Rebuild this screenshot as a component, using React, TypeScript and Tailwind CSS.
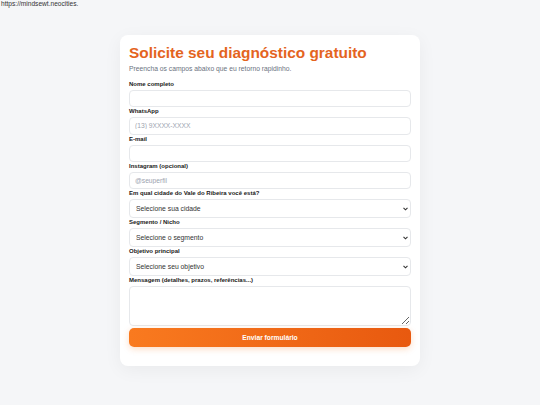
import { FC } from 'react'

type Field = {
    label: string,
    kind: 'input' | 'select' | 'textarea',
    placeholder?: string,
};

const fields: Field[] = [
    { label: 'Nome completo', kind: 'input' },
    { label: 'WhatsApp', kind: 'input', placeholder: '(13) 9XXXX-XXXX' },
    { label: 'E-mail', kind: 'input' },
    { label: 'Instagram (opcional)', kind: 'input', placeholder: '@seuperfil' },
    { label: 'Em qual cidade do Vale do Ribeira você está?', kind: 'select', placeholder: 'Selecione sua cidade' },
    { label: 'Segmento / Nicho', kind: 'select', placeholder: 'Selecione o segmento' },
    { label: 'Objetivo principal', kind: 'select', placeholder: 'Selecione seu objetivo' },
    { label: 'Mensagem (detalhes, prazos, referências...)', kind: 'textarea' },
];

const App: FC = () => {
    return (
        <div className="min-h-[405px] bg-[#f5f6f8] font-['Liberation_Sans',Arial,sans-serif] text-[#222]">
            <div className="h-[8px] pl-[1px] text-[6.6px] leading-[8px] text-[#333]">https://mindsewt.neocities.</div>
            <div className="mx-auto mt-[27px] w-[300px] rounded-[8px] bg-white px-[9px] pt-[9px] pb-[19px] shadow-[0_4px_18px_rgba(0,0,0,0.05)]">
                <h1 className="text-[15.4px] leading-[18px] font-bold text-[#e4641e]">Solicite seu diagnóstico gratuito</h1>
                <p className="mt-[3px] text-[6.75px] leading-[8px] text-[#6b7280]">Preencha os campos abaixo que eu retorno rapidinho.</p>
                <form className="mt-[7px] flex flex-col" onSubmit={(e) => e.preventDefault()}>
                    {fields.map((f) => (
                        <div key={f.label} className="flex flex-col">
                            <label className="mb-[2px] text-[6px] leading-[8px] font-bold text-[#1a1a1a]">{f.label}</label>
                            {f.kind === 'input' && (
                                <input
                                    className="h-[17.3px] rounded-[4px] border border-[#e6e8eb] bg-white px-[5px] text-[6.7px] text-[#333] outline-none placeholder:text-[#9ca3af]"
                                    placeholder={f.placeholder}
                                />
                            )}
                            {f.kind === 'select' && (
                                <div className="relative h-[19px]">
                                    <select className="block h-[19px] w-full appearance-none rounded-[4px] border border-[#e6e8eb] bg-white pr-[12px] pl-[6px] text-[6.8px] leading-[17px] text-[#333] outline-none">
                                        <option>{f.placeholder}</option>
                                    </select>
                                    <svg className="pointer-events-none absolute top-[8px] right-[3px]" width="5" height="4" viewBox="0 0 5 4">
                                        <path d="M0.5 0.8 L2.5 2.8 L4.5 0.8" fill="none" stroke="#333" strokeWidth="1.1" />
                                    </svg>
                                </div>
                            )}
                            {f.kind === 'textarea' && (
                                <textarea className="block h-[40px] rounded-[4px] border border-[#e6e8eb] bg-white px-[5px] py-[3px] text-[6.7px] text-[#333] outline-none" />
                            )}
                        </div>
                    ))}
                    <button
                        type="submit"
                        className="mt-[2px] h-[19px] rounded-[5px] bg-gradient-to-r from-[#f97a1f] to-[#e8590f] text-[6.7px] font-bold text-white shadow-[0_2px_6px_rgba(249,115,22,0.25)]"
                    >
                        Enviar formulário
                    </button>
                </form>
            </div>
        </div>
    )
}

export default App
